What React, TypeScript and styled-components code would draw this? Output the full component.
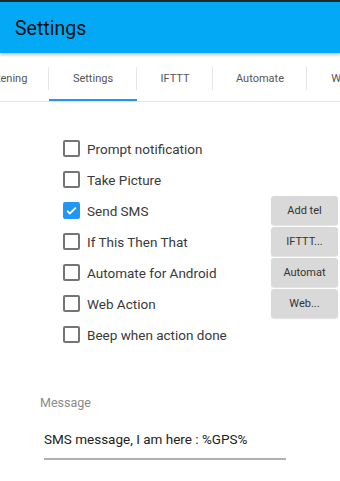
import React from "react";
import styled, { createGlobalStyle } from "styled-components";

const Global = createGlobalStyle`
  html, body { margin: 0; padding: 0; background: #fff; }
  body { font-family: Roboto, "Noto Sans", "Liberation Sans", sans-serif; overflow: hidden; }
  * { box-sizing: border-box; }
`;

const Page = styled.div`
  width: 340px;
  height: 481px;
  display: flex;
  flex-direction: column;
  overflow: hidden;
  background: #fff;
`;

const StatusStrip = styled.div`
  height: 2px;
  background: #1f2a30;
`;

const AppBar = styled.header`
  height: 51px;
  background: #03a9f4;
  display: flex;
  align-items: center;
  padding-left: 15px;
  box-shadow: 0 2px 3px rgba(0, 0, 0, 0.25);
  position: relative;
  z-index: 1;
`;

const Title = styled.h1`
  margin: 0;
  font-size: 19.5px;
  font-weight: 400;
  color: #111;
  padding-top: 1px;
`;

const TabBar = styled.nav`
  height: 46px;
  margin-top: 3px;
  border-bottom: 1px solid #e4e4e4;
  display: flex;
  overflow: hidden;
`;

const TabStrip = styled.div`
  display: flex;
  flex-shrink: 0;
  margin-left: -39px;
`;

const Tab = styled.div<{ $w: number; $active?: boolean; $sep?: boolean }>`
  width: ${(p) => p.$w}px;
  flex-shrink: 0;
  height: 45px;
  display: flex;
  align-items: center;
  justify-content: center;
  font-size: 11px;
  color: #555;
  position: relative;
  border-bottom: 2px solid ${(p) => (p.$active ? "#2196f3" : "transparent")};
  padding-top: 2px;
  &::after {
    content: "";
    display: ${(p) => (p.$sep ? "block" : "none")};
    position: absolute;
    right: 0;
    top: 11px;
    height: 23px;
    width: 1px;
    background: #e6e6e6;
  }
`;

const Content = styled.main`
  padding: 31px 2px 0 63px;
  display: grid;
  grid-template-columns: 1fr 67px;
  grid-auto-rows: 31px;
  align-items: center;
`;

const Option = styled.label`
  grid-column: 1;
  display: flex;
  align-items: center;
  gap: 7px;
  font-size: 13.5px;
  color: #3a3a3a;
`;

const Box = styled.span<{ $checked?: boolean }>`
  width: 17px;
  height: 17px;
  border-radius: 2px;
  border: 2px solid ${(p) => (p.$checked ? "#2196f3" : "#757575")};
  background: ${(p) => (p.$checked ? "#2196f3" : "transparent")};
  display: flex;
  align-items: center;
  justify-content: center;
`;

const SideButton = styled.button`
  grid-column: 2;
  height: 29px;
  border: none;
  border-radius: 3px;
  background: #d9d9d9;
  color: #333;
  font-family: inherit;
  font-size: 11px;
  padding: 0 4px;
  white-space: nowrap;
  overflow: hidden;
  box-shadow: 0 1px 1px rgba(0, 0, 0, 0.12);
`;

const Field = styled.section`
  margin-top: 45px;
  padding-left: 40px;
  display: flex;
  flex-direction: column;
`;

const FieldLabel = styled.div`
  font-size: 12.5px;
  color: #8a8a8a;
`;

const FieldInput = styled.div`
  margin-top: 21px;
  margin-left: 4px;
  width: 242px;
  font-size: 13.5px;
  color: #222;
  padding-bottom: 11px;
  border-bottom: 2px solid #b0b0b0;
`;

const Check = () => (
  <svg width="13" height="13" viewBox="0 0 24 24">
    <path d="M4 12.5l5 5L20 6.5" fill="none" stroke="#fff" strokeWidth="3.2" />
  </svg>
);

const options: { label: string; checked?: boolean; button?: string }[] = [
  { label: "Prompt notification" },
  { label: "Take Picture" },
  { label: "Send SMS", checked: true, button: "Add tel" },
  { label: "If This Then That", button: "IFTTT..." },
  { label: "Automate for Android", button: "Automat" },
  { label: "Web Action", button: "Web..." },
  { label: "Beep when action done" },
];

export default function App() {
  return (
    <Page>
      <Global />
      <StatusStrip />
      <AppBar>
        <Title>Settings</Title>
      </AppBar>
      <TabBar>
        <TabStrip>
          <Tab $w={88} $sep>Listening</Tab>
          <Tab $w={88} $active $sep>Settings</Tab>
          <Tab $w={76} $sep>IFTTT</Tab>
          <Tab $w={94} $sep>Automate</Tab>
          <Tab $w={70}>Web</Tab>
        </TabStrip>
      </TabBar>
      <Content>
        {options.map((o, i) => (
          <React.Fragment key={i}>
            <Option style={{ gridRow: i + 1 }}>
              <Box $checked={o.checked}>{o.checked && <Check />}</Box>
              {o.label}
            </Option>
            {o.button && <SideButton style={{ gridRow: i + 1 }}>{o.button}</SideButton>}
          </React.Fragment>
        ))}
      </Content>
      <Field>
        <FieldLabel>Message</FieldLabel>
        <FieldInput>SMS message, I am here : %GPS%</FieldInput>
      </Field>
    </Page>
  );
}
